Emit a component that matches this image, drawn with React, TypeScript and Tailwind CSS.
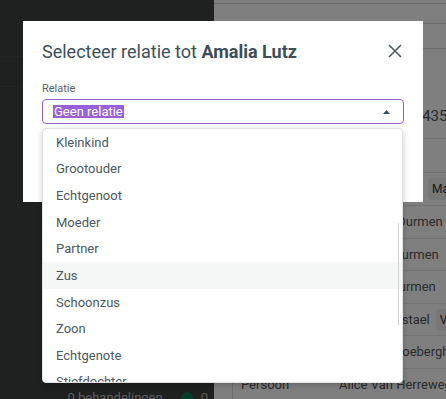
import React from "react";

const options = [
  "Kleinkind",
  "Grootouder",
  "Echtgenoot",
  "Moeder",
  "Partner",
  "Zus",
  "Schoonzus",
  "Zoon",
  "Echtgenote",
  "Stiefdochter",
];

const rows = [
  { label: "Persoon", value: "Marc Van Durmen", chip: false },
  { label: "Persoon", value: "Paul Van Durmen", chip: false },
  { label: "Persoon", value: "Rita Van Durmen", chip: false },
  { label: "Persoon", value: "Stefan Boxstael", chip: true },
  { label: "Persoon", value: "Anna De Vloeberghs", chip: false },
  { label: "Persoon", value: "Alice Van Herreweghe", chip: false },
];

export default function App() {
  return (
    <div
      className="relative w-[446px] h-[399px] overflow-hidden flex"
      style={{ fontFamily: "Roboto, 'Liberation Sans', sans-serif" }}
    >
      {/* Sidebar */}
      <aside className="w-[214px] shrink-0 bg-[#3f4040] flex flex-col">
        <div className="h-[57px] border-b border-[#474848]" />
        <div className="h-[30px] border-b border-[#474848]" />
        <div className="flex-1" />
        <div className="flex items-center h-[14px] pr-[6px] justify-end gap-[8px] text-[13px] text-[#bbbbbb] mb-[-6px]">
          <span className="mr-[10px]">0 behandelingen</span>
          <span className="w-[12px] h-[12px] rounded-full bg-[#0b7a55]" />
          <span>0</span>
        </div>
      </aside>

      {/* Main page */}
      <main className="flex-1 bg-white text-[13px] text-[#555]">
        <div className="h-[4px] border-b border-[#d8d8d8]" />
        <div className="h-[20px] border-b border-[#d8d8d8]" />
        <div className="h-[25px] border-b border-[#d8d8d8]" />
        <div className="h-[90px] border-b border-[#e4e4e4] flex items-end pb-[11px] pl-[203px] text-[15px]">
          (435
        </div>
        <div className="h-[34px] border-b border-[#e4e4e4]" />
        <div className="h-[33px] border-b border-[#e4e4e4] flex items-center pl-[214px]">
          <span className="px-[4px] py-[2px] bg-[#eeeeee] rounded text-[12px] text-[#333]">
            Ma
          </span>
        </div>
        <div className="ml-[18px] border-l border-[#d6d6d6]">
          {rows.map((r, i) => (
            <div
              key={i}
              className="h-[32.6px] flex items-center border-b border-[#e8e8e8]"
            >
              <span className="w-[106px] pl-[8px] shrink-0">{r.label}</span>
              <span className="whitespace-nowrap">{r.value}</span>
              {r.chip && (
                <span className="ml-[6px] px-[4px] py-[2px] bg-[#eeeeee] rounded text-[12px] text-[#333] whitespace-nowrap">
                  V
                </span>
              )}
            </div>
          ))}
        </div>
      </main>

      {/* Overlay */}
      <div className="absolute inset-0 bg-black/50" />

      {/* Dialog */}
      <div className="absolute left-[23px] top-[21px] w-[400px] h-[181px] bg-white px-[19px] pt-[19px]">
        <div className="flex items-start justify-between">
          <h2 className="text-[18px] leading-[24px] text-[#3d4e5b]">
            Selecteer relatie tot{" "}
            <span className="font-bold">Amalia Lutz</span>
          </h2>
          <button className="mt-[4px] mr-[2px] text-[#4a5a66]">
            <svg width="14" height="14" viewBox="0 0 14 14">
              <path
                d="M1 1L13 13M13 1L1 13"
                stroke="currentColor"
                strokeWidth="1.6"
                fill="none"
              />
            </svg>
          </button>
        </div>
        <div className="mt-[18px] text-[11px] leading-[14px] text-[#555f66]">
          Relatie
        </div>
        <div className="mt-[3px] h-[25px] rounded-[4px] border-[1.5px] border-[#9461d4] flex items-center justify-between pl-[10px] pr-[13px]">
          <span className="bg-[#9a5fd8] text-white text-[13px] leading-[13px] px-[1px]">
            Geen relatie
          </span>
          <svg width="7" height="4" viewBox="0 0 7 4">
            <path d="M0 4L3.5 0L7 4Z" fill="#3d4e5b" />
          </svg>
        </div>
      </div>

      {/* Dropdown menu */}
      <div className="absolute left-[42px] top-[128px] w-[361px] h-[255px] bg-white rounded-[4px] border border-[#e2e2e2] shadow-[0_2px_6px_rgba(0,0,0,0.2)] overflow-hidden">
        <ul>
          {options.map((o) => (
            <li
              key={o}
              className={`h-[26.67px] flex items-center pl-[13px] text-[13px] text-[#4b5763] ${
                o === "Zus" ? "bg-[#f5f7f7]" : ""
              }`}
            >
              {o}
            </li>
          ))}
        </ul>
        <div className="absolute right-[3px] top-[94px] h-[102px] w-[1.5px] bg-[#d2d2d2]" />
      </div>
    </div>
  );
}
